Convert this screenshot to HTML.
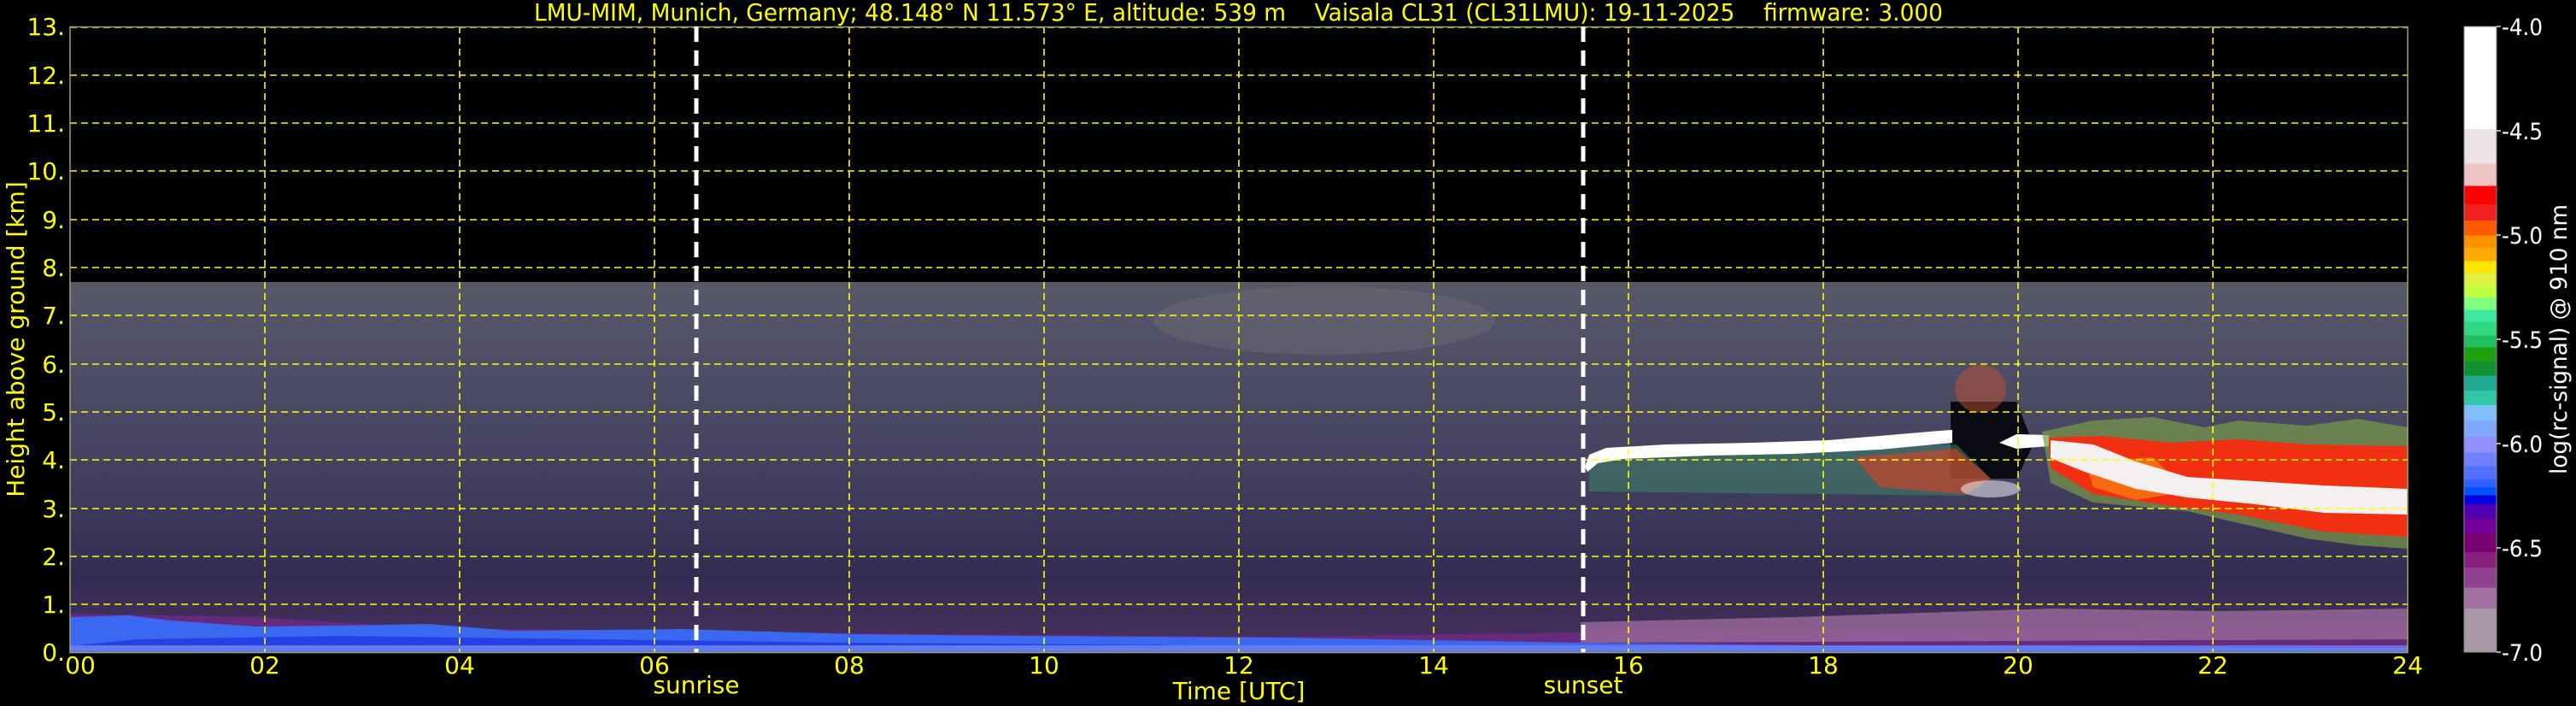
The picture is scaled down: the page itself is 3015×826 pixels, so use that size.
<!DOCTYPE html>
<html><head><meta charset="utf-8"><style>
html,body{margin:0;padding:0;background:#000;}
svg{display:block;}
text{font-family:"DejaVu Sans","Liberation Sans",sans-serif;white-space:pre;}
</style></head><body>
<svg width="3015" height="826" viewBox="0 0 3015 826" xmlns="http://www.w3.org/2000/svg">
<defs>
<linearGradient id="noise" x1="0" y1="330" x2="0" y2="763" gradientUnits="userSpaceOnUse">
<stop offset="0" stop-color="#58586a"/>
<stop offset="0.45" stop-color="#464462"/>
<stop offset="0.8" stop-color="#332c52"/>
<stop offset="1" stop-color="#4a3060"/>
</linearGradient>
<linearGradient id="cb" x1="0" y1="31" x2="0" y2="763" gradientUnits="userSpaceOnUse">
<stop offset="0" stop-color="#ffffff"/><stop offset="0.164" stop-color="#ffffff"/>
<stop offset="0.164" stop-color="#ece4e4"/><stop offset="0.219" stop-color="#ece4e4"/>
<stop offset="0.219" stop-color="#f0c4c4"/><stop offset="0.255" stop-color="#f0c4c4"/>
<stop offset="0.255" stop-color="#ff0000"/><stop offset="0.284" stop-color="#ff0000"/>
<stop offset="0.284" stop-color="#f02020"/><stop offset="0.310" stop-color="#f02020"/>
<stop offset="0.310" stop-color="#ff5a00"/><stop offset="0.334" stop-color="#ff5a00"/>
<stop offset="0.334" stop-color="#ff9000"/><stop offset="0.354" stop-color="#ff9000"/>
<stop offset="0.354" stop-color="#ffaa00"/><stop offset="0.375" stop-color="#ffaa00"/>
<stop offset="0.375" stop-color="#ffe600"/><stop offset="0.394" stop-color="#ffe600"/>
<stop offset="0.394" stop-color="#e0f040"/><stop offset="0.413" stop-color="#e0f040"/>
<stop offset="0.413" stop-color="#c0ff40"/><stop offset="0.433" stop-color="#c0ff40"/>
<stop offset="0.433" stop-color="#80ff80"/><stop offset="0.453" stop-color="#80ff80"/>
<stop offset="0.453" stop-color="#40e8a0"/><stop offset="0.472" stop-color="#40e8a0"/>
<stop offset="0.472" stop-color="#30d880"/><stop offset="0.494" stop-color="#30d880"/>
<stop offset="0.494" stop-color="#20c060"/><stop offset="0.513" stop-color="#20c060"/>
<stop offset="0.513" stop-color="#20a010"/><stop offset="0.535" stop-color="#20a010"/>
<stop offset="0.535" stop-color="#109030"/><stop offset="0.558" stop-color="#109030"/>
<stop offset="0.558" stop-color="#20a890"/><stop offset="0.582" stop-color="#20a890"/>
<stop offset="0.582" stop-color="#30c8a8"/><stop offset="0.605" stop-color="#30c8a8"/>
<stop offset="0.605" stop-color="#80c0ff"/><stop offset="0.630" stop-color="#80c0ff"/>
<stop offset="0.630" stop-color="#80a8ff"/><stop offset="0.656" stop-color="#80a8ff"/>
<stop offset="0.656" stop-color="#9090ff"/><stop offset="0.681" stop-color="#9090ff"/>
<stop offset="0.681" stop-color="#7080ff"/><stop offset="0.703" stop-color="#7080ff"/>
<stop offset="0.703" stop-color="#5070ff"/><stop offset="0.724" stop-color="#5070ff"/>
<stop offset="0.724" stop-color="#3060ff"/><stop offset="0.736" stop-color="#3060ff"/>
<stop offset="0.736" stop-color="#0050ff"/><stop offset="0.749" stop-color="#0050ff"/>
<stop offset="0.749" stop-color="#0000e0"/><stop offset="0.764" stop-color="#0000e0"/>
<stop offset="0.764" stop-color="#5000b0"/><stop offset="0.786" stop-color="#5000b0"/>
<stop offset="0.786" stop-color="#700098"/><stop offset="0.811" stop-color="#700098"/>
<stop offset="0.811" stop-color="#780070"/><stop offset="0.840" stop-color="#780070"/>
<stop offset="0.840" stop-color="#882080"/><stop offset="0.865" stop-color="#882080"/>
<stop offset="0.865" stop-color="#904090"/><stop offset="0.897" stop-color="#904090"/>
<stop offset="0.897" stop-color="#a070a0"/><stop offset="0.930" stop-color="#a070a0"/>
<stop offset="0.930" stop-color="#a898a8"/><stop offset="1" stop-color="#a898a8"/>
</linearGradient>
</defs>

<rect x="82" y="330" width="2736" height="433" fill="url(#noise)"/>
<ellipse cx="1550" cy="375" rx="200" ry="40" fill="#80807a" opacity="0.25"/>

<polygon fill="#6a2a80" opacity="0.9" points="82,718 300,722 500,735 800,738 1100,742 1500,745 1850,740 2100,738 2400,735 2818,730 2818,763 82,763"/>
<polygon fill="#9a6a9a" opacity="0.8" points="1850,728 2100,722 2400,712 2600,715 2818,712 2818,748 1850,752"/>
<polygon fill="#3a68f0" points="82,722 150,720 200,726 300,733 400,732 500,730 600,738 800,736 1000,742 1200,744 1500,746 1850,752 2200,756 2818,758 2818,763 82,763"/>
<polygon fill="#1a30e0" opacity="0.7" points="160,748 400,744 700,748 1000,752 1400,755 82,756"/>
<rect x="82" y="755" width="2736" height="7" fill="#7080f0" opacity="0.8"/>

<polygon fill="#0a0a12" points="2283,470 2360,470 2380,520 2360,560 2283,560"/>
<polygon fill="#3a8a68" opacity="0.5" points="1860,535 2290,520 2330,560 2300,580 1860,575"/>
<polygon fill="#e04020" opacity="0.6" points="2170,535 2290,525 2330,560 2300,578 2200,570"/>
<polygon fill="#ffffff" points="1855,546 1860,532 1880,524 1950,520 2050,518 2140,515 2200,510 2270,504 2285,503 2285,518 2200,526 2100,531 2000,533 1900,537 1870,542 1858,552"/>
<polygon fill="#ffffff" points="2340,518 2360,508 2398,509 2398,522 2360,525"/>
<ellipse cx="2318" cy="455" rx="30" ry="28" fill="#c05030" opacity="0.5"/>
<ellipse cx="2330" cy="572" rx="35" ry="10" fill="#ffffff" opacity="0.5"/>

<polygon fill="#7a9a48" opacity="0.7" points="2390,505 2450,492 2520,488 2580,500 2620,492 2700,498 2760,490 2818,500 2818,642 2760,638 2700,630 2620,612 2560,598 2450,588 2400,565"/>
<polygon fill="#f03010" points="2398,512 2460,510 2540,518 2620,514 2700,520 2818,522 2818,628 2720,622 2620,602 2540,592 2450,578 2400,548"/>
<polygon fill="#ff9010" opacity="0.6" points="2440,540 2520,535 2560,575 2500,585 2450,570"/>
<polygon fill="#f4f0f0" points="2400,515 2450,520 2500,540 2560,558 2640,563 2720,568 2818,572 2818,602 2720,600 2640,590 2560,582 2500,572 2440,552 2400,536"/>

<g stroke="#ffff00" stroke-width="1.6" stroke-dasharray="8,5" fill="none">
<path d="M82,707H2818M82,651H2818M82,595H2818M82,538H2818M82,482H2818M82,426H2818M82,369H2818M82,313H2818M82,257H2818M82,200H2818M82,144H2818M82,88H2818M82,32H2818"/>
<path d="M310,31V763M538,31V763M766,31V763M994,31V763M1222,31V763M1450,31V763M1678,31V763M1906,31V763M2134,31V763M2362,31V763M2590,31V763"/>
</g>
<rect x="82" y="31.5" width="2736" height="732" fill="none" stroke="#a0a070" stroke-width="1.5"/>

<g stroke="#ffffff" stroke-width="5" stroke-dasharray="18,10">
<path d="M815,31V763M1853,31V763"/>
</g>

<text x="625" y="24" font-size="28" fill="#ffff00" textLength="1649" lengthAdjust="spacingAndGlyphs" xml:space="preserve">LMU-MIM, Munich, Germany; 48.148° N 11.573° E, altitude: 539 m    Vaisala CL31 (CL31LMU): 19-11-2025    firmware: 3.000</text>

<g font-size="28" fill="#ffff00" text-anchor="end">
<text x="76" y="41">13.</text><text x="76" y="98">12.</text><text x="76" y="154">11.</text>
<text x="76" y="210">10.</text><text x="76" y="267">9.</text><text x="76" y="323">8.</text>
<text x="76" y="379">7.</text><text x="76" y="436">6.</text><text x="76" y="492">5.</text>
<text x="76" y="548">4.</text><text x="76" y="605">3.</text><text x="76" y="661">2.</text>
<text x="76" y="717">1.</text><text x="76" y="773">0.</text>
</g>
<text transform="translate(28,397) rotate(-90)" font-size="28" fill="#ffff00" text-anchor="middle">Height above ground [km]</text>

<g font-size="28" fill="#ffff00" text-anchor="middle">
<text x="94" y="788">00</text><text x="310" y="788">02</text><text x="538" y="788">04</text>
<text x="766" y="788">06</text><text x="994" y="788">08</text><text x="1222" y="788">10</text>
<text x="1450" y="788">12</text><text x="1678" y="788">14</text><text x="1906" y="788">16</text>
<text x="2134" y="788">18</text><text x="2362" y="788">20</text><text x="2590" y="788">22</text>
<text x="2818" y="788">24</text>
<text x="815" y="811">sunrise</text>
<text x="1853" y="811">sunset</text>
<text x="1450" y="818">Time [UTC]</text>
</g>

<rect x="2884" y="31" width="38" height="732" fill="url(#cb)" stroke="#888" stroke-width="1"/>
<g stroke="#ddd" stroke-width="1.5">
<path d="M2922,31h5M2922,153h5M2922,275h5M2922,397h5M2922,519h5M2922,641h5M2922,763h5"/>
</g>
<g font-size="27" fill="#ffffff">
<text x="2928" y="41" textLength="48" lengthAdjust="spacingAndGlyphs">-4.0</text>
<text x="2928" y="163" textLength="48" lengthAdjust="spacingAndGlyphs">-4.5</text>
<text x="2928" y="285" textLength="48" lengthAdjust="spacingAndGlyphs">-5.0</text>
<text x="2928" y="407" textLength="48" lengthAdjust="spacingAndGlyphs">-5.5</text>
<text x="2928" y="529" textLength="48" lengthAdjust="spacingAndGlyphs">-6.0</text>
<text x="2928" y="651" textLength="48" lengthAdjust="spacingAndGlyphs">-6.5</text>
<text x="2928" y="773" textLength="48" lengthAdjust="spacingAndGlyphs">-7.0</text>
</g>
<text transform="translate(3004,397) rotate(-90)" font-size="27" fill="#ffffff" text-anchor="middle" textLength="316" lengthAdjust="spacingAndGlyphs">log(rc-signal) @ 910 nm</text>
</svg>
</body></html>
